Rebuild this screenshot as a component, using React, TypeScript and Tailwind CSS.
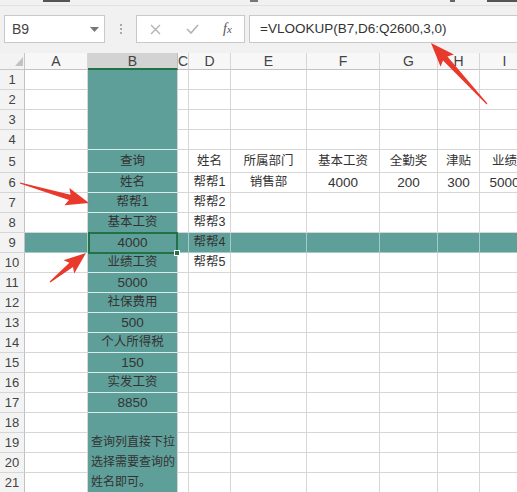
import React from "react";

const FONT = "font-['Liberation_Sans','Noto_Sans_CJK_SC',sans-serif]";

const data: Record<number, Record<string, string>> = {
  5: { B: "查询", D: "姓名", E: "所属部门", F: "基本工资", G: "全勤奖", H: "津贴", I: "业绩" },
  6: { B: "姓名", D: "帮帮1", E: "销售部", F: "4000", G: "200", H: "300", I: "5000" },
  7: { B: "帮帮1", D: "帮帮2" },
  8: { B: "基本工资", D: "帮帮3" },
  9: { B: "4000", D: "帮帮4" },
  10: { B: "业绩工资", D: "帮帮5" },
  11: { B: "5000" },
  12: { B: "社保费用" },
  13: { B: "500" },
  14: { B: "个人所得税" },
  15: { B: "150" },
  16: { B: "实发工资" },
  17: { B: "8850" },
};

const COLS = ["A", "B", "C", "D", "E", "F", "G", "H", "I"];

function arrowPts(x1: number, y1: number, x2: number, y2: number, hl: number, hw: number, bw: number) {
  const L = Math.hypot(x2 - x1, y2 - y1);
  const ux = (x2 - x1) / L;
  const uy = (y2 - y1) / L;
  const px = -uy;
  const py = ux;
  const bx = x2 - ux * hl;
  const by = y2 - uy * hl;
  const back = 3;
  const pts = [
    [x1 + px * 0.6, y1 + py * 0.6],
    [bx + px * bw, by + py * bw],
    [bx - ux * back + px * hw, by - uy * back + py * hw],
    [x2, y2],
    [bx - ux * back - px * hw, by - uy * back - py * hw],
    [bx - px * bw, by - py * bw],
    [x1 - px * 0.6, y1 - py * 0.6],
  ];
  return pts.map((p) => p.map((v) => v.toFixed(1)).join(",")).join(" ");
}

function Arrows() {
  return (
    <svg className="absolute left-0 top-0 pointer-events-none" width={517} height={492}>
      <polygon points={arrowPts(487, 104, 431, 43, 21, 9, 3)} fill="#e8392c" />
      <polygon points={arrowPts(20, 183, 89, 203, 20, 9, 2.8)} fill="#e8392c" />
      <polygon points={arrowPts(50, 282, 86, 253, 19, 8.5, 2.8)} fill="#e8392c" />
    </svg>
  );
}

function TopBar() {
  return (
    <div className="h-[53px] bg-[#f1f1f1] flex flex-col">
      <div className="relative h-[6px] border-b border-[#e2e2e2]">
        <div className="absolute left-[43px] top-0 w-[27px] h-[2px] bg-[#555]" />
        <div className="absolute left-[250px] top-0 w-[8px] h-[2px] bg-[#777]" />
        <div className="absolute left-[450px] top-0 w-[5px] h-[2px] bg-[#666]" />
        <div className="absolute left-[487px] top-0 w-[30px] h-[2px] bg-[#555]" />
      </div>
      <div className="flex items-center pt-[9px]">
        <div className="ml-[4px] w-[101px] h-[28px] border border-[#c9c9c9] bg-white flex items-center justify-between pl-[7px] pr-[5px]">
          <span className="text-[14px] text-[#444]">B9</span>
          <svg width="9" height="5" viewBox="0 0 9 5">
            <polygon points="0,0 9,0 4.5,5" fill="#777" />
          </svg>
        </div>
        <div className="ml-[14px] w-[3px] h-[10px] flex flex-col justify-between items-center">
          <div className="w-[2px] h-[2px] bg-[#aaa]" />
          <div className="w-[2px] h-[2px] bg-[#aaa]" />
          <div className="w-[2px] h-[2px] bg-[#aaa]" />
        </div>
        <div className="ml-[14px] w-[109px] h-[28px] border border-[#c9c9c9] bg-white flex items-center">
          <div className="w-[36px] flex justify-center">
            <svg width="11" height="11" viewBox="0 0 11 11">
              <path d="M1 1 L10 10 M10 1 L1 10" stroke="#b3b3b3" strokeWidth="1.4" />
            </svg>
          </div>
          <div className="w-[38px] flex justify-center">
            <svg width="13" height="10" viewBox="0 0 13 10">
              <path d="M1 5 L5 9 L12 1" stroke="#b3b3b3" strokeWidth="1.6" fill="none" />
            </svg>
          </div>
          <div className="w-[33px] flex justify-center">
            <span className="font-['Liberation_Serif',serif] italic text-[14px] text-[#555] leading-none">
              f<span className="text-[11px]">x</span>
            </span>
          </div>
        </div>
        <div className="ml-[4px] flex-1 h-[28px] border border-r-0 border-[#c9c9c9] bg-white flex items-center pl-[10px]">
          <span className="text-[13.5px] text-[#333] whitespace-nowrap">=VLOOKUP(B7,D6:Q2600,3,0)</span>
        </div>
      </div>
    </div>
  );
}

function txtCls(s: string) {
  return /^[0-9]+$/.test(s) ? "text-[13.5px]" : "text-[12.5px]";
}

export default function App() {
  const cells: React.ReactNode[] = [];

  // header row
  cells.push(
    <div key="corner" className="relative bg-[#f3f3f3] border-r border-b border-[#c6c6c6]">
      <svg className="absolute left-[15px] top-[4px]" width="8" height="9" viewBox="0 0 8 9">
        <polygon points="8,0 8,9 0,9" fill="#c2c2c2" />
      </svg>
    </div>
  );
  COLS.forEach((c) => {
    if (c === "B") {
      cells.push(
        <div key={"h" + c} className="bg-[#d3d3d3] border-r border-[#bcbcbc] border-b-2 border-b-[#217346] flex items-center justify-center text-[14px] text-[#444] leading-none">
          {c}
        </div>
      );
    } else {
      cells.push(
        <div key={"h" + c} className="bg-[#f7f7f7] border-r border-b border-r-[#d6d6d6] border-b-[#c2c2c2] flex items-center justify-center text-[14px] text-[#444] leading-none">
          {c}
        </div>
      );
    }
  });

  for (let r = 1; r <= 21; r++) {
    cells.push(
      <div key={"r" + r} className="bg-[#f3f3f3] border-r border-b border-r-[#c2c2c2] border-b-[#d6d6d6] flex items-center justify-center text-[13px] text-[#444] leading-none">
        {r}
      </div>
    );
    COLS.forEach((c) => {
      const key = c + r;
      const val = data[r]?.[c] ?? "";
      if (c === "B") {
        if (r === 1) {
          cells.push(<div key={key} className="row-span-4 bg-[#5f9f99] border-r border-b border-r-[#d4d4d4] border-b-[#d7ebe8]" />);
          return;
        }
        if (r >= 2 && r <= 4) return;
        if (r === 18) {
          cells.push(
            <div key={key} className="row-span-4 bg-[#5f9f99] border-r border-r-[#d4d4d4] flex flex-col justify-end pl-[3px] pb-[1px] text-[12px] leading-[20px] text-[#333] whitespace-nowrap">
              <span>查询列直接下拉</span>
              <span>选择需要查询的</span>
              <span>姓名即可。</span>
            </div>
          );
          return;
        }
        if (r > 18) return;
        if (r === 9) {
          cells.push(
            <div key={key} className={"relative bg-[#5f9f99] border-r border-b border-r-[#d4d4d4] border-b-[#d7ebe8] flex items-center justify-center text-[#333] leading-none " + txtCls(val)}>
              {val}
              <div className="absolute left-0 -right-px -top-px -bottom-[2px] border-2 border-[#217346]" />
              <div className="absolute -right-[3px] -bottom-[4px] w-[6px] h-[6px] bg-[#217346] border border-white" />
            </div>
          );
          return;
        }
        cells.push(
          <div key={key} className={"bg-[#5f9f99] border-r border-b border-r-[#d4d4d4] border-b-[#d7ebe8] flex items-center justify-center text-[#333] leading-none " + txtCls(val)}>
            {val}
          </div>
        );
        return;
      }
      if (r === 9) {
        cells.push(
          <div key={key} className={"bg-[#5f9f99] border-r border-b border-[#a6cbc7] flex items-center justify-center text-[#333] leading-none whitespace-nowrap " + txtCls(val)}>
            {val}
          </div>
        );
        return;
      }
      cells.push(
        <div key={key} className={"bg-white border-r border-b border-[#d6d6d6] flex items-center justify-center text-[#333] leading-none whitespace-nowrap overflow-visible " + txtCls(val)}>
          {val}
        </div>
      );
    });
  }

  return (
    <div className={"relative w-[517px] h-[492px] overflow-hidden bg-white " + FONT}>
      <TopBar />
      <div className="w-[530px] grid grid-cols-[25px_63px_90px_11px_42px_76px_73px_58px_42px_50px] grid-rows-[17px_repeat(4,20px)_23px_repeat(16,20px)]">
        {cells}
      </div>
      <Arrows />
    </div>
  );
}
